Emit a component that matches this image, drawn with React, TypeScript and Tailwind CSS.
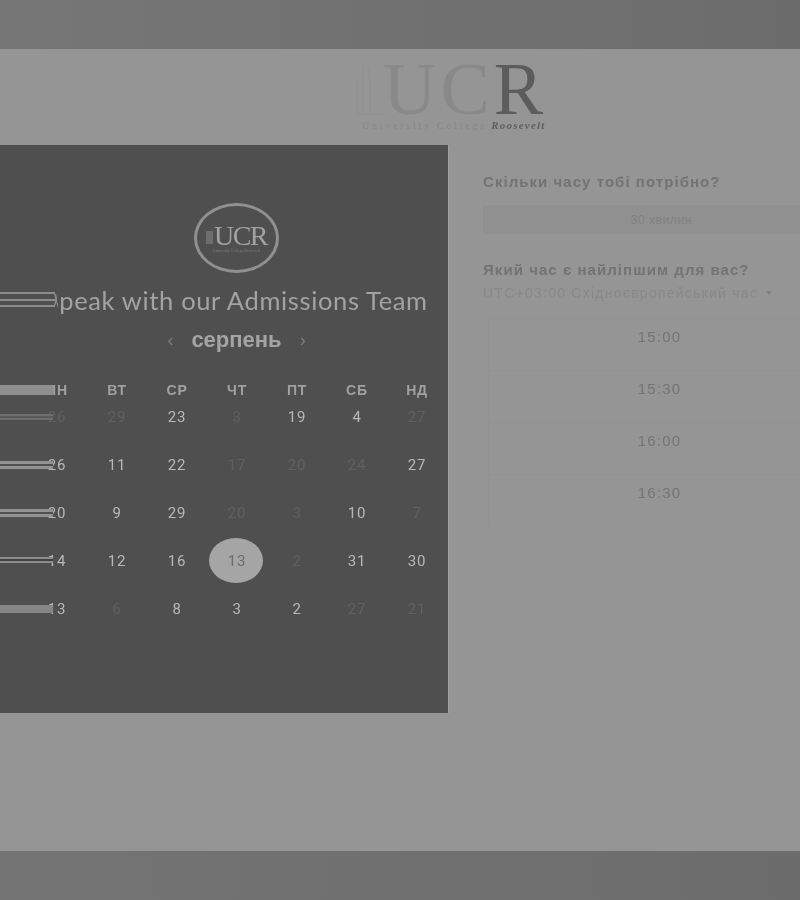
import React from 'react';

type Day = { n: number; dim?: boolean; selected?: boolean };

const weekdays = ['ПН', 'ВТ', 'СР', 'ЧТ', 'ПТ', 'СБ', 'НД'];

const weeks: Day[][] = [
  [{ n: 26, dim: true }, { n: 29, dim: true }, { n: 23 }, { n: 3, dim: true }, { n: 19 }, { n: 4 }, { n: 27, dim: true }],
  [{ n: 26 }, { n: 11 }, { n: 22 }, { n: 17, dim: true }, { n: 20, dim: true }, { n: 24, dim: true }, { n: 27 }],
  [{ n: 20 }, { n: 9 }, { n: 29 }, { n: 20, dim: true }, { n: 3, dim: true }, { n: 10 }, { n: 7, dim: true }],
  [{ n: 14 }, { n: 12 }, { n: 16 }, { n: 13, selected: true }, { n: 2, dim: true }, { n: 31 }, { n: 30 }],
  [{ n: 13 }, { n: 6, dim: true }, { n: 8 }, { n: 3 }, { n: 2 }, { n: 27, dim: true }, { n: 21, dim: true }],
];

// the striped remains that sit over the first column of each row
const rowStripes = [
  'top-[9px] h-[6px] border-y-2 border-[#6e6e6e] bg-[#5a5a5a]',
  'top-[8px] h-[8px] border-y-[3px] border-[#929292] bg-[#4f4f4f]',
  'top-[8px] h-[8px] border-y-[3px] border-[#929292] bg-[#4f4f4f]',
  'top-[8px] h-[6px] border-y-2 border-[#8c8c8c] bg-[#3f3f3f]',
  'top-[8px] h-[8px] bg-[#868686]',
];

const slots = ['15:00', '15:30', '16:00', '16:30'];

const Logo = () => (
  <div className="flex flex-col font-['Liberation_Serif',serif]">
    <div className="flex items-end h-[55px]">
      <svg width="33" height="55" viewBox="0 0 33 55" fill="none" stroke="#8f8f8f" strokeWidth="1">
        <path d="M13 4v12M19 4v12M7 16v36M13 16v36M20 16v36M7 52h26" />
      </svg>
      <div className="text-[74px] leading-[55px] h-[55px] tracking-[4px] whitespace-nowrap">
        <span className="text-[#898989]">UC</span>
        <span className="text-[#5c5c5c]">R</span>
      </div>
    </div>
    <div className="mt-[1px] ml-[12px] flex items-baseline whitespace-nowrap leading-[14px]">
      <span className="text-[10px] tracking-[2.75px] text-[#878787]">University College</span>
      <span className="ml-[4px] text-[11px] font-bold italic tracking-[1.2px] text-[#5e5e5e]">Roosevelt</span>
    </div>
  </div>
);

const Badge = () => (
  <div className="w-[85px] h-[70px] rounded-[50%] border-[3px] border-[#909090] flex flex-col items-center justify-center font-['Liberation_Serif',serif]">
    <div className="flex items-end h-[24px] text-[28px] leading-[24px] tracking-[-1.5px] text-[#a2a2a2]">
      <div className="w-[7px] h-[13px] mb-[4px] mr-[1px] bg-[#6e6e6e]" />
      UCR
    </div>
    <div className="text-[4px] leading-[5px] whitespace-nowrap text-[#7e7e7e]">University College Roosevelt</div>
  </div>
);

export default function App() {
  return (
    <div className="w-[800px] h-[900px] flex flex-col bg-[#959595] font-['Liberation_Sans',sans-serif] overflow-hidden blur-[0.5px]">
      <div className="h-[49px] bg-gradient-to-r from-[#767676] to-[#6c6c6c]" />

      <div className="h-[96px] flex pt-[13px] pl-[350px]">
        <Logo />
      </div>

      <div className="flex h-[568px]">
        <div className="w-[449px] border-r border-[#a0a0a0] bg-[#4f4f4f] flex flex-col items-center">
          <div className="mt-[58px] ml-[25px]">
            <Badge />
          </div>

          <div className="relative w-full mt-[13px] h-[28px]">
            <h1 className="ml-[45px] whitespace-nowrap font-['Lato',sans-serif] text-[25.5px] leading-[28px] text-[#a3a3a3] tracking-[0.65px]">
              Speak with our Admissions Team
            </h1>
            <div className="absolute left-0 top-[4px] w-[57px] h-[22px] bg-[#4f4f4f] pt-[2px]">
              <div className="h-[15px] rounded-r-[6px] border-r-2 border-[#8c8c8c] flex flex-col justify-between">
                <div className="h-[2px] bg-[#8c8c8c]" />
                <div className="h-[2px] bg-[#8c8c8c]" />
                <div className="h-[2px] bg-[#8c8c8c]" />
              </div>
            </div>
          </div>

          <div className="mt-[14px] ml-[25px] flex items-center gap-[18px] text-[#a4a4a4]">
            <span className="text-[18px] leading-[24px] text-[#7d7d7d]">‹</span>
            <span className="text-[22px] leading-[24px] font-bold">серпень</span>
            <span className="text-[18px] leading-[24px] text-[#7d7d7d]">›</span>
          </div>

          <div className="relative w-full mt-[27px] pl-[27px]">
            <div className="grid grid-cols-[repeat(7,60px)] h-[22px] items-center text-center text-[14px] font-bold tracking-[0.8px] text-[#a0a0a0]">
              {weekdays.map((d) => (
                <div key={d}>{d}</div>
              ))}
            </div>
            <div className="absolute left-0 top-[6px] w-[53px] h-[10px] bg-[#8f8f8f]" />
          </div>

          <div className="w-full mt-[4px] pl-[27px] flex flex-col">
            {weeks.map((week, i) => (
              <div key={i} className="relative h-[48px] grid grid-cols-[repeat(7,60px)] text-center">
                {week.map((day, j) => (
                  <div key={j} className="relative h-[24px] flex items-center justify-center font-['Roboto',sans-serif] text-[15px] tracking-[0.8px]">
                    {day.selected && <div className="absolute left-[2px] top-[-11px] w-[54px] h-[45px] rounded-[50%] bg-[#a5a5a5]" />}
                    <span className={`relative ${day.selected ? 'text-[#6c6c6c]' : day.dim ? 'text-[#606060]' : 'text-[#b8b8b8]'}`}>{day.n}</span>
                  </div>
                ))}
                <div className={`absolute left-[-27px] w-[53px] ${rowStripes[i]}`} />
              </div>
            ))}
          </div>
        </div>

        <div className="flex-1 pl-[34px] pt-[27px] min-w-0">
          <div className="text-[15px] leading-[20px] font-bold tracking-[1.05px] text-[#737373] whitespace-nowrap">Скільки часу тобі потрібно?</div>
          <div className="mt-[13px] h-[29px] bg-[#909090] flex items-center justify-center pl-[40px] text-[12px] tracking-[0.6px] text-[#808080]">30 хвилин</div>
          <div className="mt-[26px] text-[15px] leading-[20px] font-bold tracking-[1.05px] text-[#737373] whitespace-nowrap">Який час є найліпшим для вас?</div>
          <div className="mt-[3px] flex items-center gap-[8px] text-[14px] leading-[20px] tracking-[1.25px] text-[#888888] whitespace-nowrap">
            UTC+03:00 Східноєвропейський час
            <span className="w-0 h-0 border-x-[3px] border-x-transparent border-t-[4px] border-t-[#7e7e7e]" />
          </div>
          <div className="mt-[15px] ml-[5px] flex flex-col">
            {slots.map((t) => (
              <div key={t} className="h-[52px] border-t border-l border-[#929292] flex items-center justify-center pb-[15px] pl-[30px] text-[15px] tracking-[1.2px] text-[#747474]">
                {t}
              </div>
            ))}
          </div>
        </div>
      </div>

      <div className="flex-1" />
      <div className="h-[49px] bg-gradient-to-r from-[#747474] to-[#6c6c6c]" />
    </div>
  );
}
